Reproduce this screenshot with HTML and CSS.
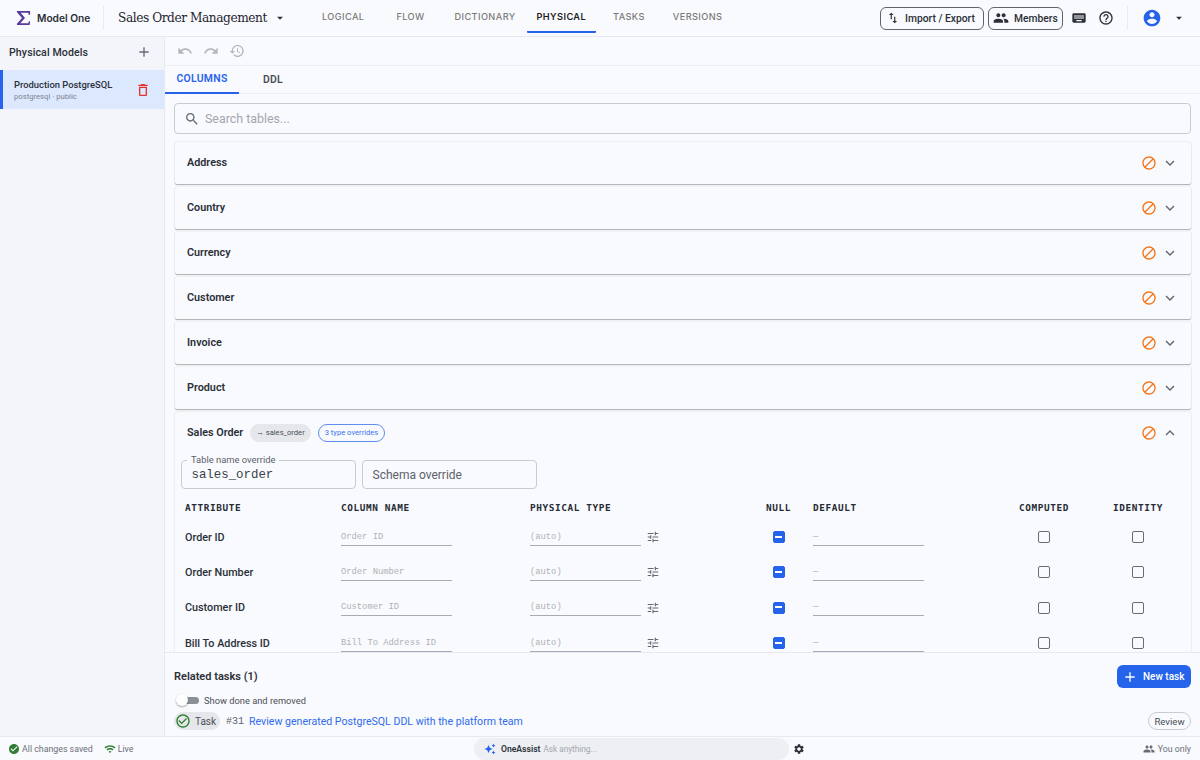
FILE: index.html
```html
<!DOCTYPE html>
<html lang="en">
<head>
<meta charset="utf-8">
<title>Sales Order Management</title>
<link rel="stylesheet" href="styles.css">
</head>
<body>
<svg class="sprite" width="0" height="0" aria-hidden="true">
  <symbol id="i-undo" viewBox="0 0 24 24"><path d="M12.5 8c-2.65 0-5.05.99-6.9 2.6L2 7v9h9l-3.62-3.62c1.39-1.16 3.16-1.88 5.12-1.88 3.54 0 6.55 2.31 7.6 5.5l2.37-.78C21.08 11.03 17.15 8 12.5 8z"/></symbol>
  <symbol id="i-redo" viewBox="0 0 24 24"><path d="M18.4 10.6C16.55 8.99 14.15 8 11.5 8c-4.65 0-8.58 3.03-9.96 7.22L3.9 16c1.05-3.19 4.05-5.5 7.6-5.5 1.95 0 3.73.72 5.12 1.88L13 16h9V7l-3.6 3.6z"/></symbol>
  <symbol id="i-history" viewBox="0 0 24 24"><path d="M13 3c-4.97 0-9 4.03-9 9H1l3.89 3.89.07.14L9 12H6c0-3.87 3.13-7 7-7s7 3.13 7 7-3.13 7-7 7c-1.93 0-3.68-.79-4.94-2.06l-1.42 1.42C8.27 19.99 10.51 21 13 21c4.97 0 9-4.03 9-9s-4.03-9-9-9zm-1 5v5l4.28 2.54.72-1.21-3.5-2.08V8H12z"/></symbol>
  <symbol id="i-add" viewBox="0 0 24 24"><path d="M19 13h-6v6h-2v-6H5v-2h6V5h2v6h6v2z"/></symbol>
  <symbol id="i-delete" viewBox="0 0 24 24"><path d="M6 19c0 1.1.9 2 2 2h8c1.1 0 2-.9 2-2V7H6v12zM8 9h8v10H8V9zm7.5-5l-1-1h-5l-1 1H5v2h14V4z"/></symbol>
  <symbol id="i-search" viewBox="0 0 24 24"><path d="M15.5 14h-.79l-.28-.27C15.41 12.59 16 11.11 16 9.5 16 5.91 13.09 3 9.5 3S3 5.91 3 9.5 5.91 16 9.5 16c1.61 0 3.09-.59 4.23-1.57l.27.28v.79l5 4.99L20.49 19l-4.99-5zm-6 0C7.01 14 5 11.99 5 9.5S7.01 5 9.5 5 14 7.01 14 9.5 11.99 14 9.5 14z"/></symbol>
  <symbol id="i-swap" viewBox="0 0 24 24"><path d="M16 17.01V10h-2v7.01h-3L15 21l4-3.99h-3zM9 3L5 6.99h3V14h2V6.99h3L9 3z"/></symbol>
  <symbol id="i-people" viewBox="0 0 24 24"><path d="M16 11c1.66 0 2.99-1.34 2.99-3S17.66 5 16 5c-1.66 0-3 1.34-3 3s1.34 3 3 3zm-8 0c1.66 0 2.99-1.34 2.99-3S9.66 5 8 5C6.34 5 5 6.34 5 8s1.34 3 3 3zm0 2c-2.33 0-7 1.17-7 3.5V19h14v-2.5c0-2.33-4.67-3.5-7-3.5zm8 0c-.29 0-.62.02-.97.05 1.16.84 1.97 1.97 1.97 3.45V19h6v-2.5c0-2.33-4.67-3.5-7-3.5z"/></symbol>
  <symbol id="i-keyboard" viewBox="0 0 24 24"><path d="M20 5H4c-1.1 0-1.99.9-1.99 2L2 17c0 1.1.9 2 2 2h16c1.1 0 2-.9 2-2V7c0-1.1-.9-2-2-2zm-9 3h2v2h-2V8zm0 3h2v2h-2v-2zM8 8h2v2H8V8zm0 3h2v2H8v-2zm-1 2H5v-2h2v2zm0-3H5V8h2v2zm9 7H8v-2h8v2zm0-4h-2v-2h2v2zm0-3h-2V8h2v2zm3 3h-2v-2h2v2zm0-3h-2V8h2v2z"/></symbol>
  <symbol id="i-help" viewBox="0 0 24 24"><path d="M11 18h2v-2h-2v2zm1-16C6.48 2 2 6.48 2 12s4.48 10 10 10 10-4.48 10-10S17.52 2 12 2zm0 18c-4.41 0-8-3.59-8-8s3.59-8 8-8 8 3.59 8 8-3.59 8-8 8zm0-14c-2.21 0-4 1.79-4 4h2c0-1.1.9-2 2-2s2 .9 2 2c0 2-3 1.75-3 5h2c0-2.25 3-2.5 3-5 0-2.21-1.79-4-4-4z"/></symbol>
  <symbol id="i-account" viewBox="0 0 24 24"><path d="M12 2C6.48 2 2 6.48 2 12s4.48 10 10 10 10-4.48 10-10S17.52 2 12 2zm0 3c1.66 0 3 1.34 3 3s-1.34 3-3 3-3-1.34-3-3 1.34-3 3-3zm0 14.2c-2.5 0-4.71-1.28-6-3.22.03-1.99 4-3.08 6-3.08 1.99 0 5.97 1.09 6 3.08-1.29 1.94-3.5 3.22-6 3.22z"/></symbol>
  <symbol id="i-drop" viewBox="0 0 24 24"><path d="M7 10l5 5 5-5z"/></symbol>
  <symbol id="i-block" viewBox="0 0 24 24"><path d="M12 2C6.48 2 2 6.48 2 12s4.48 10 10 10 10-4.48 10-10S17.52 2 12 2zM4 12c0-4.42 3.58-8 8-8 1.85 0 3.55.63 4.9 1.69L5.69 16.9C4.63 15.55 4 13.85 4 12zm8 8c-1.85 0-3.55-.63-4.9-1.69L18.31 7.1C19.37 8.45 20 10.15 20 12c0 4.42-3.58 8-8 8z"/></symbol>
  <symbol id="i-more" viewBox="0 0 24 24"><path d="M16.59 8.59L12 13.17 7.41 8.59 6 10l6 6 6-6z"/></symbol>
  <symbol id="i-less" viewBox="0 0 24 24"><path d="M12 8l-6 6 1.41 1.41L12 10.83l4.59 4.58L18 14z"/></symbol>
  <symbol id="i-tune" viewBox="0 0 24 24"><path d="M3 17v2h6v-2H3zM3 5v2h10V5H3zm10 16v-2h8v-2h-8v-2h-2v6h2zM7 9v2H3v2h4v2h2V9H7zm14 4v-2H11v2h10zm-6-4h2V7h4V5h-4V3h-2v6z"/></symbol>
  <symbol id="i-check-o" viewBox="0 0 24 24"><path d="M16.59 7.58L10 14.17l-3.59-3.58L5 12l5 5 8-8zM12 2C6.48 2 2 6.48 2 12s4.48 10 10 10 10-4.48 10-10S17.52 2 12 2zm0 18c-4.42 0-8-3.58-8-8s3.58-8 8-8 8 3.58 8 8-3.58 8-8 8z"/></symbol>
  <symbol id="i-check" viewBox="0 0 24 24"><path d="M12 2C6.48 2 2 6.48 2 12s4.48 10 10 10 10-4.48 10-10S17.52 2 12 2zm-2 15l-5-5 1.41-1.41L10 14.17l7.59-7.59L19 8l-9 9z"/></symbol>
  <symbol id="i-wifi" viewBox="0 0 24 24"><path d="M1 9l2 2c4.97-4.97 13.03-4.97 18 0l2-2C16.93 2.93 7.08 2.93 1 9zm8 8l3 3 3-3c-1.65-1.66-4.34-1.66-6 0zm-4-4l2 2c2.76-2.76 7.24-2.76 10 0l2-2C15.14 9.14 8.87 9.14 5 13z"/></symbol>
  <symbol id="i-spark" viewBox="0 0 24 24"><path d="M19 9l1.25-2.75L23 5l-2.75-1.25L19 1l-1.25 2.75L15 5l2.75 1.25L19 9zm-7.5.5L9 4 6.5 9.5 1 12l5.5 2.5L9 20l2.5-5.5L17 12l-5.5-2.5zM19 15l-1.25 2.75L15 19l2.75 1.25L19 23l1.25-2.75L23 19l-2.75-1.25L19 15z"/></symbol>
  <symbol id="i-gear" viewBox="0 0 24 24"><path d="M19.14 12.94c.04-.3.06-.61.06-.94 0-.32-.02-.64-.07-.94l2.03-1.58c.18-.14.23-.41.12-.61l-1.92-3.32c-.12-.22-.37-.29-.59-.22l-2.39.96c-.5-.38-1.03-.7-1.62-.94l-.36-2.54c-.04-.24-.24-.41-.48-.41h-3.84c-.24 0-.43.17-.47.41l-.36 2.54c-.59.24-1.13.57-1.62.94l-2.39-.96c-.22-.08-.47 0-.59.22L2.74 8.87c-.12.21-.08.47.12.61l2.03 1.58c-.05.3-.09.63-.09.94s.02.64.07.94l-2.03 1.58c-.18.14-.23.41-.12.61l1.92 3.32c.12.22.37.29.59.22l2.39-.96c.5.38 1.03.7 1.62.94l.36 2.54c.05.24.24.41.48.41h3.84c.24 0 .44-.17.47-.41l.36-2.54c.59-.24 1.13-.56 1.62-.94l2.39.96c.22.08.47 0 .59-.22l1.92-3.32c.12-.22.07-.47-.12-.61l-2.01-1.58zM12 15.6c-1.98 0-3.6-1.62-3.6-3.6s1.62-3.6 3.6-3.6 3.6 1.62 3.6 3.6-1.62 3.6-3.6 3.6z"/></symbol>
</svg>

<div class="app">
  <header class="topbar">
    <div class="brand">
      <svg class="logo" viewBox="0 0 16 16"><path d="M1 .5h14v4h-1.4L13 2.4H5L9.6 8l-5 5.5H13l.8-2H15l-.4 4H1v-1.3L6.4 8 1 1.8z"/></svg>
      <span class="brand-name">Model One</span>
    </div>
    <div class="project">
      <span class="project-name">Sales Order Management</span>
      <svg class="ic ic-14 tone-dark"><use href="#i-drop"/></svg>
    </div>
    <nav class="nav">
      <a class="nav-item nav-logical">LOGICAL</a>
      <a class="nav-item nav-flow">FLOW</a>
      <a class="nav-item nav-dict">DICTIONARY</a>
      <a class="nav-item nav-physical active">PHYSICAL</a>
      <a class="nav-item nav-tasks">TASKS</a>
      <a class="nav-item nav-versions">VERSIONS</a>
    </nav>
    <div class="top-actions">
      <button class="outline-btn btn-import"><svg class="ic ic-14 tone-dark"><use href="#i-swap"/></svg><span>Import / Export</span></button>
      <button class="outline-btn btn-members"><svg class="ic ic-16 tone-dark"><use href="#i-people"/></svg><span>Members</span></button>
      <svg class="ic ic-16 tone-dark kb"><use href="#i-keyboard"/></svg>
      <svg class="ic ic-16 tone-dark help"><use href="#i-help"/></svg>
      <span class="divider"></span>
      <svg class="ic ic-20 tone-blue account"><use href="#i-account"/></svg>
      <svg class="ic ic-14 tone-dark"><use href="#i-drop"/></svg>
    </div>
  </header>

  <div class="body-row">
    <aside class="sidebar">
      <div class="side-head">
        <span class="side-title">Physical Models</span>
        <svg class="ic ic-16 tone-grey"><use href="#i-add"/></svg>
      </div>
      <div class="model selected">
        <div class="model-text">
          <div class="model-name">Production PostgreSQL</div>
          <div class="model-sub">postgresql · public</div>
        </div>
        <svg class="ic ic-16 tone-red"><use href="#i-delete"/></svg>
      </div>
    </aside>

    <main class="main">
      <div class="toolbar">
        <svg class="ic ic-16 tone-faint"><use href="#i-undo"/></svg>
        <svg class="ic ic-16 tone-faint"><use href="#i-redo"/></svg>
        <svg class="ic ic-16 tone-faint"><use href="#i-history"/></svg>
      </div>
      <div class="tabs">
        <a class="tab active">COLUMNS</a>
        <a class="tab">DDL</a>
      </div>
      <div class="scroll">
        <div class="search">
          <svg class="ic ic-16 tone-grey"><use href="#i-search"/></svg>
          <span>Search tables...</span>
        </div>

        <section class="acc"><span class="acc-title">Address</span><span class="acc-icons"><svg class="ic ic-16 tone-orange"><use href="#i-block"/></svg><svg class="ic ic-18 tone-grey"><use href="#i-more"/></svg></span></section>
        <section class="acc"><span class="acc-title">Country</span><span class="acc-icons"><svg class="ic ic-16 tone-orange"><use href="#i-block"/></svg><svg class="ic ic-18 tone-grey"><use href="#i-more"/></svg></span></section>
        <section class="acc"><span class="acc-title">Currency</span><span class="acc-icons"><svg class="ic ic-16 tone-orange"><use href="#i-block"/></svg><svg class="ic ic-18 tone-grey"><use href="#i-more"/></svg></span></section>
        <section class="acc"><span class="acc-title">Customer</span><span class="acc-icons"><svg class="ic ic-16 tone-orange"><use href="#i-block"/></svg><svg class="ic ic-18 tone-grey"><use href="#i-more"/></svg></span></section>
        <section class="acc"><span class="acc-title">Invoice</span><span class="acc-icons"><svg class="ic ic-16 tone-orange"><use href="#i-block"/></svg><svg class="ic ic-18 tone-grey"><use href="#i-more"/></svg></span></section>
        <section class="acc"><span class="acc-title">Product</span><span class="acc-icons"><svg class="ic ic-16 tone-orange"><use href="#i-block"/></svg><svg class="ic ic-18 tone-grey"><use href="#i-more"/></svg></span></section>

        <section class="acc-open">
          <div class="acc-head">
            <span class="acc-title">Sales Order</span>
            <span class="chip-grey">→ sales_order</span>
            <span class="chip-blue">3 type overrides</span>
            <span class="acc-icons"><svg class="ic ic-16 tone-orange"><use href="#i-block"/></svg><svg class="ic ic-18 tone-grey"><use href="#i-less"/></svg></span>
          </div>
          <div class="overrides">
            <div class="field filled"><span class="field-label">Table name override</span><span class="field-value">sales_order</span></div>
            <div class="field"><span class="field-hint">Schema override</span></div>
          </div>
          <div class="grid">
            <div class="th">ATTRIBUTE</div><div class="th">COLUMN NAME</div><div class="th">PHYSICAL TYPE</div><div class="th center">NULL</div><div class="th">DEFAULT</div><div class="th center">COMPUTED</div><div class="th center">IDENTITY</div>

            <div class="td attr">Order ID</div>
            <div class="td"><span class="line-input">Order ID</span></div>
            <div class="td type"><span class="line-input">(auto)</span><svg class="ic ic-14 tone-grey"><use href="#i-tune"/></svg></div>
            <div class="td center"><span class="box on"></span></div>
            <div class="td"><span class="line-input">—</span></div>
            <div class="td center"><span class="box"></span></div>
            <div class="td center"><span class="box"></span></div>

            <div class="td attr">Order Number</div>
            <div class="td"><span class="line-input">Order Number</span></div>
            <div class="td type"><span class="line-input">(auto)</span><svg class="ic ic-14 tone-grey"><use href="#i-tune"/></svg></div>
            <div class="td center"><span class="box on"></span></div>
            <div class="td"><span class="line-input">—</span></div>
            <div class="td center"><span class="box"></span></div>
            <div class="td center"><span class="box"></span></div>

            <div class="td attr">Customer ID</div>
            <div class="td"><span class="line-input">Customer ID</span></div>
            <div class="td type"><span class="line-input">(auto)</span><svg class="ic ic-14 tone-grey"><use href="#i-tune"/></svg></div>
            <div class="td center"><span class="box on"></span></div>
            <div class="td"><span class="line-input">—</span></div>
            <div class="td center"><span class="box"></span></div>
            <div class="td center"><span class="box"></span></div>

            <div class="td attr">Bill To Address ID</div>
            <div class="td"><span class="line-input">Bill To Address ID</span></div>
            <div class="td type"><span class="line-input">(auto)</span><svg class="ic ic-14 tone-grey"><use href="#i-tune"/></svg></div>
            <div class="td center"><span class="box on"></span></div>
            <div class="td"><span class="line-input">—</span></div>
            <div class="td center"><span class="box"></span></div>
            <div class="td center"><span class="box"></span></div>
          </div>
        </section>
      </div>

      <div class="related">
        <div class="related-head">
          <span class="related-title">Related tasks (1)</span>
          <button class="new-task"><svg class="ic ic-16 tone-white"><use href="#i-add"/></svg><span>New task</span></button>
        </div>
        <div class="switch-row">
          <span class="switch"><span class="knob"></span></span>
          <span class="switch-label">Show done and removed</span>
        </div>
        <div class="task-row">
          <span class="task-chip"><svg class="ic ic-16 tone-green"><use href="#i-check-o"/></svg><span>Task</span></span>
          <span class="task-num">#31</span>
          <a class="task-link">Review generated PostgreSQL DDL with the platform team</a>
          <button class="review">Review</button>
        </div>
      </div>
    </main>
  </div>

  <footer class="status">
    <div class="status-left">
      <svg class="ic ic-12 tone-green"><use href="#i-check"/></svg><span class="saved">All changes saved</span>
      <svg class="ic ic-12 tone-green wifi"><use href="#i-wifi"/></svg><span>Live</span>
    </div>
    <div class="assist-wrap">
      <div class="assist">
        <svg class="ic ic-12 tone-blue"><use href="#i-spark"/></svg>
        <span class="assist-name">OneAssist</span>
        <span class="assist-hint">Ask anything...</span>
      </div>
      <svg class="ic ic-12 tone-dark"><use href="#i-gear"/></svg>
    </div>
    <div class="status-right">
      <svg class="ic ic-12 tone-grey"><use href="#i-people"/></svg><span>You only</span>
    </div>
  </footer>
</div>
</body>
</html>
```
FILE: styles.css
```css
* { box-sizing: border-box; }
html, body { margin: 0; height: 100%; overflow: hidden; }
body { font-family: Roboto, "Noto Sans", sans-serif; color: #1f2430; background: #f9fafd; }
.sprite { position: absolute; }
.ic { display: block; flex: none; fill: currentColor; }
.ic-12 { width: 12px; height: 12px; }
.ic-14 { width: 14px; height: 14px; }
.ic-16 { width: 16px; height: 16px; }
.ic-18 { width: 18px; height: 18px; }
.ic-20 { width: 20px; height: 20px; }
.tone-dark { color: #2b2f38; }
.tone-grey { color: #646a75; }
.tone-faint { color: #b4b7bd; }
.tone-blue { color: #2563eb; }
.tone-red { color: #e5322d; }
.tone-orange { color: #f4761b; }
.tone-green { color: #2e7d32; }
.tone-white { color: #fff; }

.app { height: 760px; display: flex; flex-direction: column; }

/* top bar */
.topbar { height: 37px; flex: none; display: flex; align-items: center; border-bottom: 1px solid #e6e9f2; background: #f9fafd; }
.brand { width: 104px; height: 24px; display: flex; align-items: center; padding-left: 16px; gap: 6px; border-right: 1px solid #e9ebf1; flex: none; }
.logo { width: 15px; height: 16px; fill: #5b3a9e; flex: none; }
.brand-name { font-family: Inter, sans-serif; font-size: 10.2px; font-weight: 600; color: #2b2f38; white-space: nowrap; }
.project { display: flex; align-items: center; gap: 6px; margin-left: 14px; width: 180px; flex: none; }
.project-name { font-family: "DejaVu Serif", serif; font-size: 12.2px; letter-spacing: -.45px; font-weight: 400; color: #1f2430; white-space: nowrap; }
.nav { display: flex; align-items: stretch; height: 36px; flex: none; margin-left: 14px; }
.nav-item { font-family: Inter, sans-serif; font-size: 9.2px; font-weight: 500; letter-spacing: .4px; color: #7a7a7c; display: flex; align-items: center; height: 33px; padding: 0 10px 0; border-radius: 1px; white-space: nowrap; }
.nav-item.active { color: #1b1d24; font-weight: 600; border-bottom: 2px solid #2563eb; height: 33px; padding: 2px 10px 0; }
.nav-logical { margin-right: 12px; }
.nav-flow { margin-right: 10px; }
.nav-dict { margin-right: 1px; }
.nav-physical { margin-right: 7px; }
.nav-tasks { margin-right: 8px; }
.top-actions { margin-left: auto; display: flex; align-items: center; padding-right: 14px; }
.outline-btn { height: 23px; display: flex; align-items: center; gap: 5px; border: 1px solid #60646c; border-radius: 6px; background: transparent; padding: 0 0 0 4px; font-family: Roboto, sans-serif; font-size: 10.3px; font-weight: 500; color: #2b2f38; white-space: nowrap; }
.btn-import { width: 104px; margin-right: 4px; padding-left: 5px; }
.btn-members { width: 75px; }
.kb { margin-left: 8px; }
.help { margin-left: 11px; }
.divider { width: 1px; height: 24px; background: #e9ebf1; margin: 0 14px 0 13px; }
.account { margin-right: 10px; }

/* layout */
.body-row { flex: 1; display: flex; min-height: 0; }
.sidebar { width: 165px; flex: none; background: #f3f5fa; border-right: 1px solid #e6e9f2; }
.side-head { height: 33px; display: flex; align-items: center; justify-content: space-between; padding: 0 12px 3px 9px; }
.side-title { font-size: 10.6px; font-weight: 500; letter-spacing: .1px; color: #2b2f38; white-space: nowrap; }
.model { height: 39px; display: flex; align-items: center; justify-content: space-between; background: #dbe8fe; border-left: 3px solid #2563eb; padding: 0 13px 0 11px; }
.model-name { font-size: 9.4px; font-weight: 500; color: #2b2f38; line-height: 13px; white-space: nowrap; }
.model-sub { font-size: 7.7px; color: #7d838f; line-height: 11px; white-space: nowrap; }

.main { flex: 1; min-width: 0; display: flex; flex-direction: column; }
.toolbar { height: 29px; flex: none; display: flex; align-items: center; gap: 10px; padding-left: 12px; border-bottom: 1px solid #eceef3; }
.tabs { height: 28px; flex: none; display: flex; border-bottom: 1px solid #eceef3; }
.tab { font-size: 10.4px; font-weight: 600; letter-spacing: .3px; color: #4a4e57; display: flex; align-items: center; justify-content: center; height: 28px; padding-bottom: 2px; }
.tab.active { width: 74px; color: #2563eb; border-bottom: 2px solid #2563eb; }
.tab:not(.active) { width: 68px; }
.scroll { flex: 1; min-height: 0; overflow: hidden; padding: 9px 9px 0; border-bottom: 1px solid #e6e9f2; }
.search { height: 31px; border: 1px solid #c8cbd1; border-radius: 4px; display: flex; align-items: center; gap: 5px; padding-left: 9px; font-size: 12.4px; color: #a3a6ad; margin-bottom: 8px; }
.acc { height: 42px; margin: 0 0 3px 1px; background: #f9fafd; display: flex; align-items: center; justify-content: space-between; padding: 0 12px; box-shadow: 0 1px 1px rgba(0,0,0,.28), 0 0 2px rgba(0,0,0,.14); border-radius: 2px; }
.acc-title { font-size: 10.8px; font-weight: 600; color: #2b2f38; white-space: nowrap; margin-bottom: 1.5px; }
.acc-icons { display: flex; align-items: center; gap: 4px; margin-left: auto; }
.acc-open { margin-left: 1px; background: #f9fafd; box-shadow: 0 0 2px rgba(0,0,0,.18); padding-bottom: 20px; border-radius: 2px; }
.acc-head { height: 42px; display: flex; align-items: center; padding: 0 12px; }
.chip-grey { margin-left: 7px; height: 18px; line-height: 18px; padding: 0 6px; border-radius: 9px; background: #e5e7eb; font-size: 7.6px; color: #4a4e57; white-space: nowrap; }
.chip-blue { margin-left: 7px; height: 18px; line-height: 16px; padding: 0 6px; border-radius: 9px; border: 1px solid #5f8df0; font-size: 7.6px; color: #3b74ee; white-space: nowrap; }
.overrides { display: flex; gap: 6.5px; padding: 6px 0 0 6px; }
.field { width: 174.5px; height: 29px; border: 1px solid #c8cbd1; border-radius: 4px; display: flex; align-items: center; padding-left: 9.5px; position: relative; }
.field-label { position: absolute; left: 5px; top: -6px; font-size: 9.4px; line-height: 10px; color: #5c616b; background: #f9fafd; padding: 0 4px; white-space: nowrap; }
.field-value { font-family: "Liberation Mono", monospace; font-size: 12.4px; color: #3a3f49; white-space: nowrap; }
.field-hint { font-size: 12px; color: #5c616b; white-space: nowrap; }
.grid { display: grid; grid-template-columns: 156px 189px 214px 69px 184px 94px 94px; grid-template-rows: 25px; grid-auto-rows: 35.3px; margin: 5.5px 0 0 10px; }
.th { font-family: "DejaVu Sans Mono", monospace; font-size: 9.4px; font-weight: 700; letter-spacing: .6px; color: #262b36; display: flex; align-items: center; white-space: nowrap; }
.td { display: flex; align-items: center; }
.center { justify-content: center; }
.attr { font-size: 10.8px; font-weight: 500; color: #2b2f38; white-space: nowrap; }
.type { gap: 5px; }
.line-input { width: 111px; height: 18px; margin-bottom: 1px; border-bottom: 1px solid #a8abb2; font-family: "Liberation Mono", monospace; font-size: 8.8px; line-height: 18px; color: #aeb1b7; white-space: nowrap; }
.box { width: 12px; height: 12px; border: 1.5px solid #666c78; border-radius: 2px; display: block; }
.box.on { background: #2563eb; border-color: #2563eb; position: relative; }
.box.on::after { content: ""; position: absolute; left: 1.5px; right: 1.5px; top: 3.5px; height: 2px; background: #fff; }

/* related tasks */
.related { height: 83px; flex: none; padding: 0 9px; display: flex; flex-direction: column; }
.related-head { height: 36px; display: flex; align-items: center; justify-content: space-between; padding-top: 11px; }
.related-title { font-size: 11px; font-weight: 600; color: #2b2f38; }
.new-task { width: 74px; height: 23px; border: 0; border-radius: 6px; background: #2563eb; color: #fff; display: flex; align-items: center; gap: 5px; padding: 0 0 0 5px; font-family: Roboto, sans-serif; font-size: 10px; font-weight: 500; white-space: nowrap; }
.switch-row { height: 22px; display: flex; align-items: center; padding: 0 0 0 3px; gap: 5px; }
.switch { width: 22px; height: 7px; border-radius: 4px; background: #8b8f96; position: relative; display: block; flex: none; }
.knob { position: absolute; left: -1px; top: -2.5px; width: 12px; height: 12px; border-radius: 50%; background: #fff; box-shadow: 0 1px 2px rgba(0,0,0,.35); }
.switch-label { font-size: 9.3px; color: #4a4e57; white-space: nowrap; }
.task-row { height: 20px; display: flex; align-items: center; }
.task-chip { height: 18px; width: 46px; border-radius: 9px; background: #e5e7eb; display: flex; align-items: center; gap: 4px; padding-left: 1px; font-size: 10px; color: #4a4e57; flex: none; }
.task-num { font-family: "Liberation Mono", monospace; font-size: 10px; color: #5c616b; margin-left: 6px; }
.task-link { font-size: 10.6px; color: #2f6bec; margin-left: 5px; white-space: nowrap; }
.review { margin-left: auto; width: 43px; height: 18px; border: 1px solid #c8cbd1; border-radius: 9px; background: transparent; padding: 0; font-family: Roboto, sans-serif; font-size: 9.6px; color: #4a4e57; white-space: nowrap; }

/* status */
.status { height: 24px; flex: none; display: grid; grid-template-columns: 474px 1fr auto; align-items: center; border-top: 1px solid #e6e9f2; font-size: 8.8px; color: #6a6f7a; }
.status-left { display: flex; align-items: center; padding-left: 8px; gap: 2px; white-space: nowrap; }
.saved { margin-right: 9px; }
.assist-wrap { display: flex; align-items: center; gap: 0; }
.assist { width: 315px; height: 22px; background: #edeff3; border-radius: 11px; display: flex; align-items: center; padding-left: 10px; gap: 5px; }
.assist-wrap .tone-dark { margin-left: 4px; }
.assist-name { font-size: 8.6px; font-weight: 600; color: #2b2f38; }
.assist-hint { color: #a3a6ad; font-size: 8.2px; margin-left: -2px; }
.status-right { display: flex; align-items: center; gap: 3px; padding-right: 9px; white-space: nowrap; }
```
